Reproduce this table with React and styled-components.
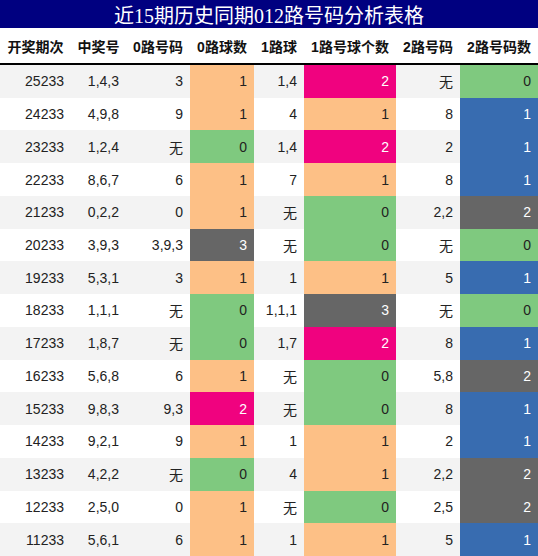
import React from 'react';
import styled, { createGlobalStyle } from 'styled-components';

const Global = createGlobalStyle`
    html, body {
        margin:0;
        padding:0;
        background:#fff;
    }
`;

const Sheet = styled.div`
    width:538px;
    height:556px;
    display:grid;
    grid-template-rows:28px 35px 2px repeat(15, 1fr);
    font-family:"Liberation Sans", "Noto Sans CJK SC", sans-serif;
    font-size:14px;
    color:#222;
`;

const Title = styled.div`
    background:#000080;
    color:#fff;
    font-family:"Liberation Serif", "Noto Sans CJK SC", serif;
    font-size:20px;
    display:flex;
    align-items:center;
    justify-content:center;
`;

const cols = '71px 55px 64px 64px 50px 92px 64px 78px';

const Row = styled.div`
    display:grid;
    grid-template-columns:${cols};
    background:${p => p.$shade ? '#f3f3f3' : '#fff'};
`;

const Rule = styled.div`
    background:#000;
`;

const Head = styled.div`
    display:flex;
    align-items:center;
    justify-content:center;
    font-weight:bold;
    color:#111;
    white-space:nowrap;
`;

const Cell = styled.div`
    display:flex;
    align-items:center;
    justify-content:flex-end;
    padding-right:7px;
    white-space:nowrap;
    background:${p => p.$bg || 'transparent'};
    color:${p => p.$light ? '#fff' : '#222'};
`;

const GREEN = '#7fc97f';
const PEACH = '#fdc086';
const PINK = '#f0027f';
const GREY = '#666666';
const BLUE = '#386cb0';

// 0路/1路 个数的配色
const countColor = {0: GREEN, 1: PEACH, 2: PINK, 3: GREY};
// 2路号码数的配色
const twoColor = {0: GREEN, 1: BLUE, 2: GREY};
const lightBg = [PINK, GREY, BLUE];

const heads = ['开奖期次', '中奖号', '0路号码', '0路球数', '1路球', '1路号球个数', '2路号码', '2路号码数'];

const rows = [
    ['25233', '1,4,3', '3', 1, '1,4', 2, '无', 0],
    ['24233', '4,9,8', '9', 1, '4', 1, '8', 1],
    ['23233', '1,2,4', '无', 0, '1,4', 2, '2', 1],
    ['22233', '8,6,7', '6', 1, '7', 1, '8', 1],
    ['21233', '0,2,2', '0', 1, '无', 0, '2,2', 2],
    ['20233', '3,9,3', '3,9,3', 3, '无', 0, '无', 0],
    ['19233', '5,3,1', '3', 1, '1', 1, '5', 1],
    ['18233', '1,1,1', '无', 0, '1,1,1', 3, '无', 0],
    ['17233', '1,8,7', '无', 0, '1,7', 2, '8', 1],
    ['16233', '5,6,8', '6', 1, '无', 0, '5,8', 2],
    ['15233', '9,8,3', '9,3', 2, '无', 0, '8', 1],
    ['14233', '9,2,1', '9', 1, '1', 1, '2', 1],
    ['13233', '4,2,2', '无', 0, '4', 1, '2,2', 2],
    ['12233', '2,5,0', '0', 1, '无', 0, '2,5', 2],
    ['11233', '5,6,1', '6', 1, '1', 1, '5', 1],
];

function Colored({ value, map }) {
    const bg = map[value];
    return <Cell $bg={bg} $light={lightBg.includes(bg)}>{value}</Cell>;
}

export default function App() {
    return (
        <Sheet>
            <Global />
            <Title>近15期历史同期012路号码分析表格</Title>
            <Row>
                {heads.map(h => <Head key={h}>{h}</Head>)}
            </Row>
            <Rule />
            {rows.map((r, i) => (
                <Row key={r[0]} $shade={i % 2 === 0}>
                    <Cell>{r[0]}</Cell>
                    <Cell>{r[1]}</Cell>
                    <Cell>{r[2]}</Cell>
                    <Colored value={r[3]} map={countColor} />
                    <Cell>{r[4]}</Cell>
                    <Colored value={r[5]} map={countColor} />
                    <Cell>{r[6]}</Cell>
                    <Colored value={r[7]} map={twoColor} />
                </Row>
            ))}
        </Sheet>
    );
}
